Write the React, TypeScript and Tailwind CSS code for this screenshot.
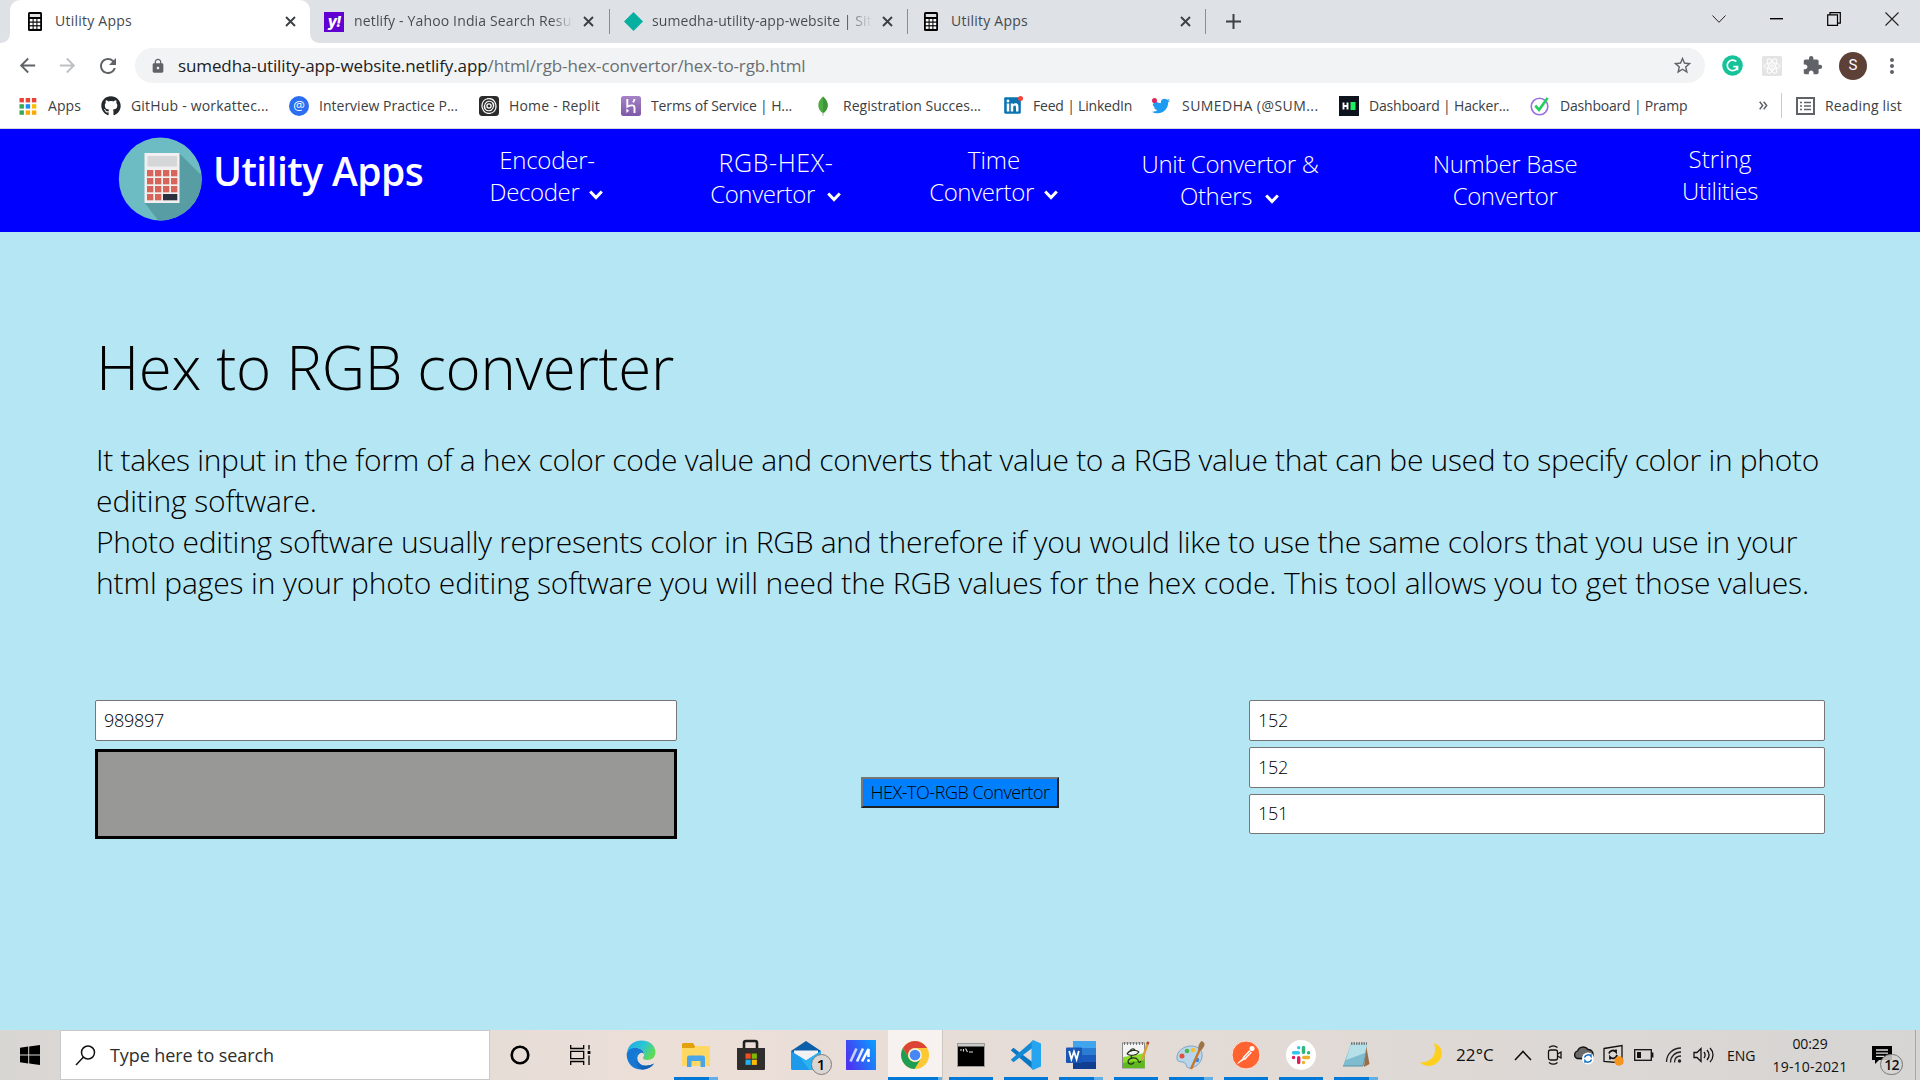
import type { ReactNode } from "react";
import { FaGithub, FaLinkedin, FaTwitter } from "react-icons/fa";
import { MdArrowBack, MdArrowForward, MdExtension, MdLock, MdMoreVert, MdRefresh, MdStarBorder } from "react-icons/md";

/* ---------- browser chrome icons ---------- */

const Calc = () => (
  <svg width="14" height="19" viewBox="0 0 14 19">
    <rect width="14" height="19" rx="1.5" fill="#000" />
    <rect x="1.800" y="2" width="10.400" height="3" fill="#dfe1e5" />
    {[7, 10.7, 14.4].map((y) => [1.8, 5.6, 9.4].map((x) => <rect key={`${x}-${y}`} x={x} y={y} width="2.8" height="2.5" fill="#fff" />))}
  </svg>
);

const Cross = () => (
  <svg width="11" height="11" viewBox="0 0 11 11" stroke="#3c4043" strokeWidth="1.9" className="shrink-0">
    <path d="M1 1l9 9M10 1l-9 9" />
  </svg>
);

const Yahoo = () => (
  <span className="flex h-5 w-5 shrink-0 items-center justify-center bg-[#6001d2] font-['Inter'] text-[15px] leading-none font-extrabold tracking-[-1px] text-white italic">
    y!
  </span>
);

const AppsGrid = () => (
  <svg width="20" height="20" viewBox="0 0 20 20">
    {["#ea4335", "#ea4335", "#ea4335", "#34a853", "#1a8cf0", "#fbbc05", "#34a853", "#fbaa05", "#fbaa05"].map((c, i) => (
      <rect key={i} x={1.5 + (i % 3) * 6.2} y={2 + Math.floor(i / 3) * 6.2} width="4.4" height="4.4" fill={c} />
    ))}
  </svg>
);

const AtIcon = () => (
  <span className="flex h-5 w-5 items-center justify-center rounded-full bg-[#2b6ef2] pb-px font-['Open_Sans'] text-[13px] leading-none text-white">@</span>
);

const Replit = () => (
  <svg width="20" height="20" viewBox="0 0 20 20" fill="none">
    <rect width="20" height="20" rx="3.5" fill="#2b2b2b" />
    <g stroke="#fff" strokeWidth="1.1" strokeLinecap="round">
      <circle cx="10" cy="10" r="2.100" strokeWidth="1.300" />
      <path d="M6 12.500c-1.200-3 .3-7 4-7.300 3-.2 5 2.200 4.800 4.800" />
      <path d="M14 7.500c1.200 3-.3 7-4 7.300-3 .2-5-2.200-4.800-4.800" />
      <path d="M4.500 14.500C1.500 10 3 4 8.500 2.800M15.500 5.500c3 4.500 1.500 10.500-4 11.700" />
      <path d="M8.500 2.800c3-.6 5.500.3 7 2.700M11.500 17.200c-3 .6-5.500-.3-7-2.700" />
    </g>
  </svg>
);

const Heroku = () => (
  <svg width="20" height="20" viewBox="0 0 20 20">
    <defs>
      <linearGradient id="hk" x1="0" y1="0" x2="0" y2="1">
        <stop stopColor="#a583c6" />
        <stop offset="1" stopColor="#7f58a8" />
      </linearGradient>
    </defs>
    <rect width="20" height="20" rx="2.500" fill="url(#hk)" />
    <path d="M6.300 3v7.600c1.800-.8 4-1.500 5.500-1.200 1.700.3 1.700 1.500 1.700 2.600v5M13.500 3c-.1 1.300-.7 2.400-1.500 3.300" fill="none" stroke="#fff" strokeWidth="1.900" />
    <path d="M5.400 12.600l2.700 2.200-2.700 2.300z" fill="#fff" />
  </svg>
);

const Leaf = () => (
  <svg width="20" height="20" viewBox="0 0 20 20">
    <path d="M10 .5c3.200 3 5 6 4.700 9.300-.3 3.500-2.200 6-4.700 7.700-2.500-1.700-4.400-4.200-4.700-7.700C5 6.500 6.800 3.500 10 .5z" fill="#4faa41" />
    <path d="M10 .5c3.200 3 5 6 4.700 9.300-.3 3.500-2.200 6-4.700 7.700z" fill="#3f9636" />
    <path d="M10 16v4" stroke="#b8b8a8" />
  </svg>
);

const LinkedIn = () => (
  <span className="relative flex h-5 w-5 items-center">
    <FaLinkedin size={19} color="#0a74b3" />
    <span className="absolute top-0 right-0 h-[5px] w-[5px] rounded-full bg-[#f5453a]" />
  </span>
);

const Twitter = () => (
  <span className="relative flex h-5 w-5 items-center">
    <FaTwitter size={18} color="#1d9bf0" />
    <span className="absolute top-0.5 left-0 h-[5px] w-[5px] rounded-full bg-[#e0245e]" />
  </span>
);

const HackerRank = () => (
  <svg width="20" height="20" viewBox="0 0 20 20">
    <rect width="20" height="20" fill="#0e141e" />
    <path d="M4.500 6.500v7M8.500 6.500v7M4 10h4.500" stroke="#fff" strokeWidth="1.900" />
    <rect x="11.500" y="6" width="5" height="8" fill="#1ef05e" />
  </svg>
);

const Pramp = () => (
  <svg width="21" height="20" viewBox="0 0 21 20" fill="none">
    <circle cx="10" cy="10.500" r="8.700" stroke="#9a6fe0" strokeWidth="1.700" />
    <path d="M5.500 9.500l4 4.500L18.500 1.500" stroke="#1fd15a" strokeWidth="2.800" />
  </svg>
);

const ReadingList = () => (
  <svg width="19" height="18" viewBox="0 0 19 18" fill="none" stroke="#5f6368">
    <rect x="1" y="1" width="17" height="16" strokeWidth="2" />
    <path d="M4 5.500h2M4 9h2M4 12.500h2M8 5.500h7M8 9h7M8 12.500h7" strokeWidth="1.600" />
  </svg>
);

const ReactExt = () => (
  <svg width="20" height="20" viewBox="0 0 20 20" fill="none" stroke="#fff" strokeWidth="1">
    <rect width="20" height="20" rx="1.500" fill="#e4e4e4" stroke="none" />
    <ellipse cx="10" cy="10" rx="8" ry="3.200" />
    <ellipse cx="10" cy="10" rx="8" ry="3.200" transform="rotate(60 10 10)" />
    <ellipse cx="10" cy="10" rx="8" ry="3.200" transform="rotate(120 10 10)" />
    <circle cx="10" cy="10" r="1.300" />
  </svg>
);

const Grammarly = () => (
  <svg width="21" height="21" viewBox="0 0 21 21" fill="none">
    <circle cx="10.500" cy="10.500" r="10.300" fill="#15c39a" />
    <path d="M14.300 6.600A5.300 5.300 0 1 0 15.600 12M11.300 11.700h4.200v3.600" stroke="#fff" strokeWidth="1.700" />
  </svg>
);

/* ---------- site icons ---------- */

const Logo = () => (
  <svg width="84" height="84" viewBox="0 0 84 84" className="shrink-0">
    <defs>
      <clipPath id="disc">
        <circle cx="42.300" cy="42" r="41.500" />
      </clipPath>
    </defs>
    <g clipPath="url(#disc)">
      <rect width="84" height="84" fill="#6dbbc3" />
      <path d="M61 16l30 30v50H50L26 65z" fill="#589ca4" />
      <rect x="26.500" y="16" width="35" height="50" fill="#f1efef" />
      <rect x="29.500" y="19" width="29.500" height="10.500" fill="#d5d6d8" />
      {[33, 41, 49, 57].map((y, r) =>
        [29, 37, 45, 53].map((x, c) => (r === 3 && c > 1 ? null : <rect key={`${x}-${y}`} x={x} y={y} width="6.300" height="6.300" fill="#d8655a" />)),
      )}
      <rect x="45" y="57" width="14.300" height="6.300" fill="#2a303e" />
    </g>
  </svg>
);

const Caret = ({ className }: { className: string }) => (
  <svg width="16" height="12" viewBox="0 0 16 12" className={`inline-block ${className}`} fill="none">
    <path d="M2.200 2.500L8 8.500l5.800-6" stroke="#fff" strokeWidth="3" />
  </svg>
);

/* ---------- taskbar icons ---------- */

const Edge = () => (
  <svg width="30" height="30" viewBox="0 0 30 30">
    <defs>
      <linearGradient id="e1" x1="0" y1="0" x2="1" y2=".5">
        <stop stopColor="#1fa5e6" />
        <stop offset=".55" stopColor="#2cc5d8" />
        <stop offset="1" stopColor="#5fda55" />
      </linearGradient>
      <linearGradient id="e2" x1="0" y1="0" x2="1" y2="1">
        <stop stopColor="#1a86d9" />
        <stop offset="1" stopColor="#0c50a5" />
      </linearGradient>
    </defs>
    <path d="M1 12C2.500 4.500 8.500.5 15.500.5 24 .5 29.500 6 29.500 12c0 5-3.500 8-8 8-3 0-4.500-1-4.500-2s1.200-1.500 1.200-4c0-3-3-5.500-7.200-5.500C6 8.500 2 10 1 12z" fill="url(#e1)" />
    <path d="M.7 15C.5 10.500 4.500 8 9.500 8c4.500 0 8.500 2.500 8.500 6-1-1.200-2.500-1.500-3.500-1-3 1.300-4.300 5-2.500 8.500 2.500 5 9.500 5.500 16 2-2.700 4-7 6-12.500 6C7 29.500.9 23.500.7 15z" fill="#1478d4" />
    <path d="M9.500 14c-2.500 5 0 12.500 6 15.500 5.500 0 10-2.300 12.500-6-6.500 3.500-13.500 3-16-2-1.800-3.500-.5-7.200 2.500-8.500-2-.8-4-.5-5 1z" fill="url(#e2)" />
  </svg>
);

const Folder = () => (
  <svg width="28" height="26" viewBox="0 0 28 26">
    <path d="M0 2.500C0 1.500.7 1 1.500 1H11l2 3v4H0z" fill="#e2a20b" />
    <path d="M0 6h12l2-2h14v20H0z" fill="#ffd864" />
    <path d="M5 25v-9c0-1.700 1-2.500 2.500-2.500h13c1.500 0 2.500.8 2.500 2.500v9h-4.500v-6h-9v6z" fill="#4aa5e8" />
  </svg>
);

const Store = () => (
  <svg width="30" height="32" viewBox="0 0 30 32">
    <path d="M8 10V4c0-1.500.7-2 2-2h9c1.300 0 2 .5 2 2v6" fill="none" stroke="#1f1f1f" strokeWidth="2.600" />
    <path d="M1 9h28v20.500c0 1-.5 1.500-1.500 1.500h-25C1.500 31 1 30.500 1 29.500z" fill="#2f2e2d" />
    <path d="M9.500 14.500h5.200v5.200H9.500z" fill="#f25022" />
    <path d="M15.700 14.500h5.200v5.200h-5.200z" fill="#7fba00" />
    <path d="M9.500 20.700h5.200v5.200H9.500z" fill="#1fb0ee" />
    <path d="M15.700 20.700h5.200v5.200h-5.200z" fill="#ffb900" />
  </svg>
);

const Mail = () => (
  <span className="relative">
    <svg width="30" height="29" viewBox="0 0 30 29">
      <path d="M0 10L15 0l15 10v6H0z" fill="#0b5fa8" />
      <path d="M3 9.500h24v8L15 22 3 17z" fill="#f3f1f3" />
      <path d="M0 10l15 9.500L30 10v17.500c0 .8-.5 1.500-1.500 1.500h-27C.5 29 0 28.300 0 27.500z" fill="#1d9bea" />
      <path d="M30 10v17.500c0 .8-.5 1.500-1.500 1.500h-10L8 15l7 4.500z" fill="#29b3f3" />
    </svg>
    <span className="absolute top-[13px] left-[20px] flex h-[21px] w-[21px] items-center justify-center rounded-full border border-[#7d7d7d] bg-[#dcd6d2] font-['Open_Sans'] text-[15px] leading-none font-semibold text-black">
      1
    </span>
  </span>
);

const MyAsus = () => (
  <svg width="30" height="30" viewBox="0 0 30 30">
    <defs>
      <linearGradient id="ma" x1="0" y1=".6" x2="1" y2=".2">
        <stop stopColor="#4b35f0" />
        <stop offset="1" stopColor="#0a9bff" />
      </linearGradient>
    </defs>
    <rect width="30" height="30" fill="url(#ma)" />
    <path d="M4.500 21.500L10.500 8.500" stroke="#c3cfff" strokeWidth="2.600" />
    <path d="M11 21.500L17 8.500" stroke="#e6ecff" strokeWidth="2.600" />
    <path d="M16 21.500L22.500 9v8" stroke="#fff" strokeWidth="2.600" fill="none" />
    <circle cx="22.500" cy="20.500" r="1.500" fill="#fff" />
  </svg>
);

const Chrome = () => (
  <svg width="28" height="28" viewBox="0 0 28 28">
    <circle cx="14" cy="14" r="14" fill="#fcc934" />
    <path d="M1.900 7A14 14 0 0 1 26.100 7H14a7 7 0 0 0-6.500 9.700z" fill="#dc4437" />
    <path d="M1.900 7A14 14 0 0 0 13.500 28l6.500-10.500a7 7 0 0 1-12.400-.7z" fill="#1f9d55" />
    <circle cx="14" cy="14" r="6.800" fill="#f6f2ee" />
    <circle cx="14" cy="14" r="5.300" fill="#4787f3" />
  </svg>
);

const Terminal = () => (
  <svg width="28" height="24" viewBox="0 0 28 24">
    <rect x=".5" y=".5" width="27" height="23" fill="#000" stroke="#9a9a9a" />
    <rect x="1" y="1" width="26" height="2.500" fill="#c9c9c9" />
    <path d="M3 7h2M6.500 6v2.500M8.500 5.500l2 3.500M12 9h4" stroke="#ddd" strokeWidth="1.100" />
  </svg>
);

const VSCode = () => (
  <svg width="30" height="30" viewBox="0 0 30 30">
    <path d="M0 10l2.500-2.200L22 22.500V29.500L0 10.500z" fill="#0a76c4" />
    <path d="M0 20l2.500 2.200L22 7.500V.5L0 19.500z" fill="#1489d6" />
    <path d="M22 0l8 3.500v23L22 30l-1.500-1.500V1.500z" fill="#25a4ef" />
  </svg>
);

const Word = () => (
  <svg width="30" height="28" viewBox="0 0 30 28">
    <path d="M7 0h23v7H7z" fill="#41a5ee" />
    <path d="M7 7h23v7H7z" fill="#2b7cd3" />
    <path d="M7 14h23v7H7z" fill="#185abd" />
    <path d="M7 21h23v7H7z" fill="#103f91" />
    <rect y="6.500" width="16" height="15.500" rx="1" fill="#1a56b5" />
    <path d="M3.200 10l2.200 8.300L8 10.500l2.600 7.800L12.800 10" fill="none" stroke="#fff" strokeWidth="1.800" />
  </svg>
);

const NotepadPP = () => (
  <svg width="28" height="28" viewBox="0 0 28 28">
    <rect x=".5" y="2" width="22" height="25" fill="#f4f4f4" stroke="#8a8a8a" />
    <path d="M2.500 1v3M5.500 1v3M8.500 1v3M11.500 1v3M14.500 1v3M17.500 1v3M20.500 1v3" stroke="#777" />
    <path d="M1 16c6-1 14-2 21.500-4v15H1z" fill="#8bdb2b" />
    <path d="M1 22c7-2 14-1 21.500-3v8H1z" fill="#5fb81f" />
    <path d="M5 13c2-4 9-5 12-2M5 13c3 2 9 2 12-2M8 10c1-3 5-3 5 0M6 20c2-4 8-4 10-1M6 20c0 4 5 4 6 1M16 19c0 3 2 3 3 1M9 15l1 3" fill="none" stroke="#26331c" strokeWidth="1.200" />
    <path d="M20 19L25.500 3" stroke="#d9a13e" strokeWidth="2.400" />
    <path d="M25.400 3.300l.9-2.600" stroke="#b34b3a" strokeWidth="2.600" />
  </svg>
);

const Paint = () => (
  <svg width="30" height="30" viewBox="0 0 30 30">
    <path d="M1 19C0 12 7 6 15 6s12 5 11 11-6 11-13 11c-3 0-2-3-4-5S1.500 23 1 19z" fill="#b7d6ec" stroke="#7ea6c4" />
    <circle cx="6" cy="16" r="2.500" fill="#e0503a" />
    <circle cx="11" cy="11" r="2.300" fill="#4bb749" />
    <circle cx="17" cy="10" r="2.300" fill="#f2c230" />
    <circle cx="21" cy="20" r="2.300" fill="#4987d8" />
    <path d="M15 29L24 9" stroke="#c9752e" strokeWidth="2.400" />
    <path d="M22.500 10c-1-4 1-7 3-9 2 1 3.500 2 3 4s-2 4-4 6z" fill="#9c7447" />
  </svg>
);

const Postman = () => (
  <svg width="30" height="30" viewBox="0 0 30 30">
    <circle cx="15" cy="15" r="14" fill="#ff6430" stroke="#fbe3da" />
    <circle cx="21" cy="8.500" r="2.500" fill="#fff" />
    <path d="M19 10.500l-7 7.500M20.500 12l-7 7.500" stroke="#fff" strokeWidth="1.400" />
    <path d="M6.500 23.500l6.500-6 1.200 1.200z" fill="#fff" stroke="#fff" strokeWidth=".7" />
  </svg>
);

const Slack = () => (
  <svg width="30" height="30" viewBox="0 0 30 30" strokeWidth="3.400" strokeLinecap="round">
    <circle cx="15" cy="15" r="15" fill="#fff" />
    <path d="M7.500 12.700h4.900M12.700 7.600v.1" stroke="#36c5f0" />
    <path d="M17.500 7.500v4.900M22.500 12.700h.1" stroke="#2eb67d" />
    <path d="M17.700 17.500h4.900M17.500 22.500v.1" stroke="#ecb22e" />
    <path d="M12.700 17.700v4.900M7.500 17.500h.1" stroke="#e01e5a" />
  </svg>
);

const Notepad = () => (
  <svg width="30" height="28" viewBox="0 0 30 28">
    <path d="M25 4l3.500 19-5.500 3z" fill="#9a6e42" />
    <path d="M10 3h16l-4 22H2z" fill="#7fbccf" />
    <path d="M10 3h16l-2 9L5 19z" fill="#b5dfe9" />
    <path d="M10 2.500h16" stroke="#6b7479" strokeWidth="2.400" strokeDasharray="1.500 1" />
    <path d="M2 25h20l3-13" fill="none" stroke="#5d93a7" />
  </svg>
);

/* ---------- data ---------- */

const bookmarks: { label: string; icon: ReactNode; width: string; text: string }[] = [
  { label: "Apps", icon: <AppsGrid />, width: "w-[83px]", text: "tracking-[0.1px]" },
  { label: "GitHub - workattec...", icon: <FaGithub size={20} color="#24292e" />, width: "w-[188px]", text: "tracking-[0.19px]" },
  { label: "Interview Practice P...", icon: <AtIcon />, width: "w-[190px]", text: "tracking-[0.01px]" },
  { label: "Home - Replit", icon: <Replit />, width: "w-[142px]", text: "tracking-[0.19px]" },
  { label: "Terms of Service | H...", icon: <Heroku />, width: "w-[192px]", text: "tracking-[-0.13px]" },
  { label: "Registration Succes...", icon: <Leaf />, width: "w-[190px]", text: "tracking-[0.04px]" },
  { label: "Feed | LinkedIn", icon: <LinkedIn />, width: "w-[149px]", text: "tracking-[-0.2px]" },
  { label: "SUMEDHA (@SUM...", icon: <Twitter />, width: "w-[187px]", text: "tracking-[0.45px]" },
  { label: "Dashboard | Hacker...", icon: <HackerRank />, width: "w-[191px]", text: "tracking-[-0.18px]" },
  { label: "Dashboard | Pramp", icon: <Pramp />, width: "w-[180px]", text: "tracking-[-0.2px]" },
];

const navItems: { top: string; bottom: string; box: string; topText: string; caret?: string }[] = [
  { top: "Encoder-", bottom: "Decoder", box: "ml-[52px] w-[140px] mt-[15px]", topText: "tracking-[-0.25px]", caret: "ml-[9px]" },
  { top: "RGB-HEX-", bottom: "Convertor", box: "ml-[79px] w-[160px] mt-[17px]", topText: "text-[25px] tracking-[0.65px]", caret: "ml-[11px]" },
  { top: "Time", bottom: "Convertor", box: "ml-[58px] w-[160px] mt-[15px]", topText: "tracking-[0px]", caret: "ml-[9px]" },
  { top: "Unit Convertor &", bottom: "Others", box: "ml-[56px] w-[200px] mt-[19px]", topText: "tracking-[-0.35px]", caret: "ml-[12px]" },
  { top: "Number Base", bottom: "Convertor", box: "ml-[85px] w-[180px] mt-[19px]", topText: "tracking-[-0.3px]" },
  { top: "String", bottom: "Utilities", box: "ml-[65px] w-[120px] mt-[14px]", topText: "tracking-[0.1px]" },
];

const taskIcons: { icon: ReactNode; bar?: "full" | "split" | "active" }[] = [
  { icon: <Edge /> },
  { icon: <Folder />, bar: "split" },
  { icon: <Store /> },
  { icon: <Mail /> },
  { icon: <MyAsus /> },
  { icon: <Chrome />, bar: "active" },
  { icon: <Terminal />, bar: "full" },
  { icon: <VSCode />, bar: "full" },
  { icon: <Word />, bar: "split" },
  { icon: <NotepadPP />, bar: "full" },
  { icon: <Paint />, bar: "split" },
  { icon: <Postman />, bar: "full" },
  { icon: <Slack />, bar: "full" },
  { icon: <Notepad />, bar: "split" },
];

/* ---------- sections ---------- */

function TabStrip() {
  return (
    <div className="flex h-[43px] items-stretch bg-[#dee1e6] text-[14px] text-[#45494d]">
      <div className="flex w-[10px] items-end bg-white">
        <div className="h-full w-full rounded-br-[9px] bg-[#dee1e6]" />
      </div>
      <div className="flex w-[300px] items-center rounded-t-[10px] bg-white pr-[14px] pl-[18px]">
        <Calc />
        <span className="ml-[13px] flex-1 pb-[2px] tracking-[0.24px]">Utility Apps</span>
        <Cross />
      </div>
      <div className="flex w-[300px] items-center bg-white">
        <div className="flex h-full w-full items-center rounded-bl-[9px] bg-[#dee1e6] pl-[14px]">
          <Yahoo />
          <span className="ml-[10px] w-[219px] overflow-hidden bg-linear-to-r from-[#45494d] from-90% to-transparent bg-clip-text pb-[2px] tracking-[0.15px] whitespace-nowrap text-transparent">
            netlify - Yahoo India Search Resul
          </span>
          <span className="ml-[10px] flex w-[25px] justify-start">
            <Cross />
          </span>
          <span className="ml-auto h-[25px] w-px bg-[#8a8d91]" />
        </div>
      </div>
      <div className="flex w-[298px] items-center pl-[14px]">
        <svg width="19" height="19" viewBox="0 0 19 19">
          <path d="M9.500 0l9.500 9.500-9.500 9.500L0 9.500z" fill="#05b0a0" />
        </svg>
        <span className="ml-[9px] w-[220px] overflow-hidden bg-linear-to-r from-[#45494d] from-88% to-transparent bg-clip-text pb-[2px] tracking-[0.08px] whitespace-nowrap text-transparent">
          sumedha-utility-app-website | Sit
        </span>
        <span className="ml-[10px]">
          <Cross />
        </span>
        <span className="ml-auto h-[25px] w-px bg-[#8a8d91]" />
      </div>
      <div className="flex w-[298px] items-center pl-[16px]">
        <Calc />
        <span className="ml-[13px] flex-1 pb-[2px] tracking-[0.24px]">Utility Apps</span>
        <Cross />
        <span className="ml-[14px] h-[25px] w-px bg-[#8a8d91]" />
      </div>
      <div className="flex items-center pl-[20px]">
        <svg width="15" height="15" viewBox="0 0 15 15" stroke="#3c4043" strokeWidth="2">
          <path d="M7.500 0v15M0 7.500h15" />
        </svg>
      </div>
      <div className="ml-auto flex h-[37px] items-center gap-[44px] pr-[21px]">
        <svg width="14" height="8" viewBox="0 0 14 8" fill="none" stroke="#222">
          <path d="M.5.5L7 7.300 13.500.5" />
        </svg>
        <svg width="13" height="2" viewBox="0 0 13 2">
          <rect width="13" height="1.400" fill="#000" />
        </svg>
        <svg width="14" height="14" viewBox="0 0 14 14" fill="none" stroke="#000" strokeWidth="1.200">
          <path d="M.7 2.800h9.800v10.500H.7zM3 2.500V.7h10.300v10.500h-2.500" />
        </svg>
        <svg width="14" height="14" viewBox="0 0 14 14" stroke="#222" strokeWidth="1.100">
          <path d="M.5.5l13 13M13.500.5l-13 13" />
        </svg>
      </div>
    </div>
  );
}

function Toolbar() {
  return (
    <div className="flex h-[45px] items-center bg-white">
      <div className="flex w-[135px] items-center gap-[17px] pl-[16px]">
        <MdArrowBack size={23} color="#5f6368" />
        <MdArrowForward size={23} color="#bdc1c6" />
        <MdRefresh size={24} color="#5f6368" />
      </div>
      <div className="flex h-[35px] w-[1570px] items-center rounded-full bg-[#f1f3f4] pr-[12px] pl-[15px]">
        <MdLock size={16} color="#5f6368" />
        <span className="ml-[12px] flex-1 text-[17px] tracking-[-0.11px] text-[#6b6f73]">
          <span className="text-[#202124]">sumedha-utility-app-website.netlify.app</span>/html/rgb-hex-convertor/hex-to-rgb.html
        </span>
        <MdStarBorder size={21} color="#5f6368" />
      </div>
      <div className="flex items-center pl-[17px]">
        <Grammarly />
        <span className="ml-[19px]">
          <ReactExt />
        </span>
        <MdExtension size={21} color="#5f6368" className="ml-[20px]" />
        <span className="ml-[16px] flex h-7 w-7 items-center justify-center rounded-full bg-[#5d4037] font-['Roboto'] text-[15px] text-white">S</span>
        <MdMoreVert size={24} color="#5f6368" className="ml-[13px]" />
      </div>
    </div>
  );
}

function Bookmarks() {
  return (
    <div className="flex h-[41px] items-start border-b border-[#d5d7da] bg-white pl-[18px] text-[14px] text-[#3c4043]">
      {bookmarks.map((b) => (
        <div key={b.label} className={`flex h-[35px] shrink-0 items-center whitespace-nowrap ${b.width}`}>
          <span className="mr-[10px] flex w-5 shrink-0 justify-center">{b.icon}</span>
          <span className={b.text}>{b.label}</span>
        </div>
      ))}
      <div className="ml-auto flex h-[35px] items-center pr-[17px]">
        <svg width="9" height="9" viewBox="0 0 9 9" fill="none" stroke="#5f6368" strokeWidth="1.500">
          <path d="M.7.7l3 3.800-3 3.800M4.700.7l3 3.800-3 3.800" />
        </svg>
        <span className="ml-[13px] h-[25px] w-px bg-[#c9cbce]" />
        <span className="ml-[14px]">
          <ReadingList />
        </span>
        <span className="ml-[10px] w-[78px] tracking-[0.17px] whitespace-nowrap">Reading list</span>
      </div>
    </div>
  );
}

function SiteNav() {
  return (
    <nav className="flex h-[103px] items-start bg-[#0000ff] pl-[118px] text-white">
      <div className="mt-[8px]">
        <Logo />
      </div>
      <div className="mt-[15px] ml-[11px] w-[212px] text-[39px] leading-[54px] font-semibold tracking-[-0.55px] whitespace-nowrap">Utility Apps</div>
      {navItems.map((n) => (
        <div key={n.top} className={`shrink-0 text-center text-[24px] leading-[32px] font-light tracking-[-0.38px] whitespace-nowrap ${n.box}`}>
          <div className={n.topText}>{n.top}</div>
          <div>
            {n.bottom}
            {n.caret && <Caret className={n.caret} />}
          </div>
        </div>
      ))}
    </nav>
  );
}

function Field({ value }: { value: string }) {
  return (
    <input
      readOnly
      value={value}
      className="block h-[41px] w-full rounded-[2px] border border-[#767676] bg-white px-[8px] pb-[2px] text-[18px] font-light tracking-[-0.28px] text-black outline-none last:h-[40px]"
    />
  );
}

function Converter() {
  return (
    <main className="flex-1 px-[95px] pt-[93px] font-light text-black">
      <h1 className="h-[84px] pl-px text-[60px] leading-[84px] tracking-[-0.3px] whitespace-nowrap">Hex to RGB converter</h1>
      <div className="mt-[30px] pl-px text-[30px] leading-[41px] whitespace-nowrap">
        <p className="tracking-[-0.315px]">
          It takes input in the form of a hex color code value and converts that value to a RGB value that can be used to specify color in photo
        </p>
        <p className="tracking-[-0.1px]">editing software.</p>
        <p className="tracking-[-0.28px]">
          Photo editing software usually represents color in RGB and therefore if you would like to use the same colors that you use in your
        </p>
        <p className="tracking-[-0.119px]">
          html pages in your photo editing software you will need the RGB values for the hex code. This tool allows you to get those values.
        </p>
      </div>
      <div className="mt-[97px] flex items-start">
        <div className="w-[582px]">
          <Field value="989897" />
          <div className="mt-[8px] h-[90px] border-[3px] border-black bg-[#989897]" />
        </div>
        <button className="mt-[77px] ml-[184px] h-[31px] w-[198px] border-2 border-t-[#767676] border-r-[#212121] border-b-[#212121] border-l-[#767676] bg-[#0080ff] pb-[2px] text-[18px] leading-none font-light tracking-[-0.45px] whitespace-nowrap">
          HEX-TO-RGB Convertor
        </button>
        <div className="ml-[190px] flex w-[576px] flex-col gap-[6px]">
          <Field value="152" />
          <Field value="152" />
          <Field value="151" />
        </div>
      </div>
    </main>
  );
}

function Underline({ bar }: { bar: "full" | "split" | "active" }) {
  return (
    <span className="absolute inset-x-0 bottom-0 flex h-[3px] justify-center">
      {bar === "full" && <span className="w-[44px] bg-[#0078d7]" />}
      {bar === "split" && (
        <>
          <span className="w-[35px] bg-[#0078d7]" />
          <span className="w-[9px] bg-[#62aee8]" />
        </>
      )}
      {bar === "active" && (
        <>
          <span className="w-[50px] bg-[#0078d7]" />
          <span className="w-[4px] bg-[#62aee8]" />
        </>
      )}
    </span>
  );
}

function Tray() {
  return (
    <div className="flex h-full flex-1 items-center pl-[36px] text-[#111]">
      <svg width="24" height="26" viewBox="0 0 24 26" className="shrink-0">
        <path d="M15 1c6 2 9 7 7.500 13S15 24 10 24c-4 0-7-1.500-9-4 8 1 15-4 15-12 0-2.500-.3-5-1-7z" fill="#ffcf1f" />
      </svg>
      <span className="ml-[13px] w-[58px] text-[17px] tracking-[0.1px]">22°C</span>
      <svg width="18" height="11" viewBox="0 0 18 11" fill="none" stroke="#111" strokeWidth="1.600" className="shrink-0">
        <path d="M1 10l8-8.500L17 10" />
      </svg>
      <svg width="16" height="20" viewBox="0 0 16 20" fill="none" stroke="#111" strokeWidth="1.300" className="ml-[15px] shrink-0">
        <rect x="1.500" y="5" width="9" height="10" rx="2" />
        <path d="M10.500 9l3.500-2v6l-3.500-2M2 2.500c2.500-2 6-2 8.500 0M2 17.500c2.500 2 6 2 8.500 0" />
      </svg>
      <svg width="22" height="20" viewBox="0 0 22 20" className="ml-[10px] shrink-0">
        <path d="M4 13.500a4 4 0 0 1 .5-7.500A6 6 0 0 1 15 4.500a5 5 0 0 1 5 6.500v3z" fill="#6b6b6b" stroke="#111" strokeWidth="1.300" />
        <circle cx="15" cy="13.500" r="6" fill="#fff" />
        <path d="M11.500 12.500a3.700 3.700 0 0 1 6.500-1.200v-2M18.500 14.500a3.700 3.700 0 0 1-6.500 1.200v2" fill="none" stroke="#1272c4" strokeWidth="1.500" />
      </svg>
      <svg width="21" height="22" viewBox="0 0 21 22" fill="none" stroke="#111" strokeWidth="1.300" className="ml-[8px] shrink-0">
        <path d="M1 4.500l18-3V19l-18-1.500z" />
        <path d="M6 9.500a4 4 0 0 1 7-1.500V5.500M14 11a4 4 0 0 1-7 2v2.500" strokeWidth="1.800" />
        <circle cx="16" cy="17" r="4.700" fill="#f7941d" stroke="none" />
      </svg>
      <svg width="20" height="12" viewBox="0 0 20 12" fill="none" stroke="#111" strokeWidth="1.300" className="ml-[10px] shrink-0">
        <rect x=".7" y=".7" width="16.600" height="10.600" />
        <path d="M18.500 3.500v5" strokeWidth="1.800" />
        <rect x="3" y="3" width="4" height="6" fill="#111" stroke="none" />
      </svg>
      <svg width="18" height="18" viewBox="0 0 18 18" fill="none" stroke="#222" strokeWidth="1.300" className="ml-[11px] shrink-0">
        <path d="M1.500 16C1.500 8 8 2 16 2" />
        <path d="M5.500 16.500C5.500 10.500 10 6 16 6M9.500 16.500c0-4 2.500-6.500 6.500-6.500" />
        <circle cx="14.500" cy="15" r="1.700" fill="#222" stroke="none" />
      </svg>
      <svg width="22" height="18" viewBox="0 0 22 18" fill="none" stroke="#111" strokeWidth="1.300" className="ml-[10px] shrink-0">
        <path d="M1 6.500h3l4-4v13l-4-4H1zM11 6c1.500 2 1.500 4 0 6M14 4c2.500 3 2.500 7 0 10M17 2c4 4 4 10 0 14" />
      </svg>
      <span className="ml-[12px] w-[30px] text-[14px] tracking-[0px]">ENG</span>
      <div className="ml-[7px] w-[92px] text-center text-[14px] leading-[23px] tracking-[0.2px]">
        <div className="tracking-[-0.1px]">00:29</div>
        <div>19-10-2021</div>
      </div>
      <span className="relative ml-[16px]">
        <svg width="20" height="20" viewBox="0 0 20 20">
          <path d="M0 1h20v14H7l-4 4v-4H0z" fill="#000" />
          <path d="M4 5h12M4 8.200h12M4 11.400h8" stroke="#ddd" strokeWidth="1.300" />
        </svg>
        <span className="absolute top-[9px] left-[8px] flex h-[21px] w-[23px] items-center justify-center rounded-full border border-[#777] bg-[#d5d3d1]/85 text-[14px] leading-none font-semibold tracking-[-0.8px]">
          12
        </span>
      </span>
      <span className="mr-[4px] ml-auto h-full w-px bg-[#a9a7a5]" />
    </div>
  );
}

function Taskbar() {
  return (
    <div className="flex h-[50px] items-center bg-linear-to-r from-[#d8d6d3] via-[#ecdfd8] via-35% to-[#d6d5d3]">
      <div className="flex w-[60px] justify-center">
        <svg width="20" height="20" viewBox="0 0 20 20">
          <path d="M0 2.800l8.200-1.200v8H0zM9.200 1.400L20 0v9.600H9.200zM0 10.500h8.200v8L0 17.300zM9.200 10.500H20V20L9.200 18.600z" fill="#000" />
        </svg>
      </div>
      <div className="flex h-full w-[430px] items-center border border-[#c9c9c9] bg-white pl-[14px]">
        <svg width="21" height="21" viewBox="0 0 21 21" fill="none" stroke="#111" strokeWidth="1.500">
          <circle cx="13" cy="7.500" r="6.500" />
          <path d="M8.500 12L1 20" />
        </svg>
        <span className="ml-[14px] text-[18px] tracking-[-0.09px] text-[#2e2e2e]">Type here to search</span>
      </div>
      <div className="flex w-[60px] justify-center">
        <svg width="20" height="20" viewBox="0 0 20 20">
          <circle cx="10" cy="10" r="8.300" fill="none" stroke="#000" strokeWidth="2.600" />
        </svg>
      </div>
      <div className="flex w-[63px] justify-center pr-[2px]">
        <svg width="21" height="20" viewBox="0 0 21 20" fill="none" stroke="#000" strokeWidth="1.300">
          <path d="M.7 0v3.500h13V0M.7 20v-3.500h13V20M.7 6.300h13v7.400H.7zM19 0v4.500M19 10.500V20" />
          <rect x="17.600" y="6" width="2.800" height="3" fill="#000" stroke="none" />
        </svg>
      </div>
      {taskIcons.map((t, i) => (
        <div key={i} className={`relative flex h-full w-[55px] shrink-0 items-center justify-center ${t.bar === "active" ? "border-r border-[#cfc6c0] bg-[#f7f2ef]" : ""}`}>
          {t.icon}
          {t.bar && <Underline bar={t.bar} />}
        </div>
      ))}
      <Tray />
    </div>
  );
}

export default function App() {
  return (
    <div className="flex h-[1080px] w-[1920px] flex-col overflow-hidden bg-[#b5e6f4] font-['Open_Sans',sans-serif]">
      <TabStrip />
      <Toolbar />
      <Bookmarks />
      <SiteNav />
      <Converter />
      <Taskbar />
    </div>
  );
}
